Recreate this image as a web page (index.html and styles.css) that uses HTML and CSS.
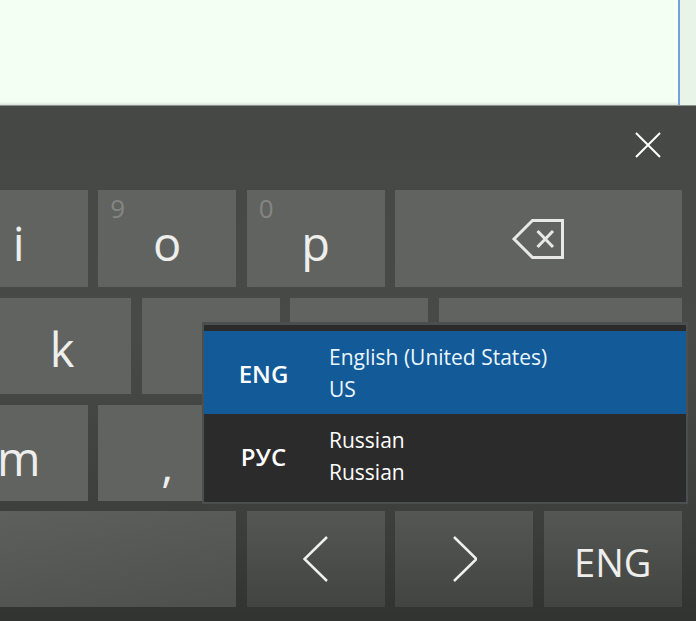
FILE: index.html
```html
<!DOCTYPE html>
<html lang="en">
<head>
<meta charset="utf-8">
<title>Touch keyboard</title>
<link rel="stylesheet" href="styles.css">
</head>
<body>
<div class="document"><div class="document-edge"></div></div>
<section class="keyboard">
  <div class="titlebar">
    <svg class="close-icon" width="26" height="26" viewBox="0 0 26 26"><path d="M1 1 25 25M25 1 1 25"/></svg>
  </div>
  <div class="rows">
    <div class="row">
      <div class="key"><span class="letter">i</span></div>
      <div class="key"><span class="hint">9</span><span class="letter">o</span></div>
      <div class="key"><span class="hint">0</span><span class="letter">p</span></div>
      <div class="key key-back">
        <svg width="54" height="42" viewBox="0 0 54 42"><path class="back-outline" d="M3 21 21.5 2.500H51.500V39.500H21.500Z"/><path class="back-x" d="M26.500 13 42 29M42 13 26.500 29"/></svg>
      </div>
    </div>
    <div class="row">
      <div class="key"><span class="letter letter-k">k</span></div>
      <div class="key"></div>
      <div class="key"></div>
      <div class="key key-enter"></div>
    </div>
    <div class="row">
      <div class="key"><span class="letter">m</span></div>
      <div class="key"><span class="letter letter-comma">,</span></div>
      <div class="key"></div>
      <div class="key"></div>
      <div class="key"></div>
    </div>
    <div class="row row-bottom">
      <div class="key key-space"></div>
      <div class="key">
        <svg class="chevron" width="26" height="46" viewBox="0 0 26 46"><path d="M24 1 1.500 23 24 45"/></svg>
      </div>
      <div class="key">
        <svg class="chevron" width="26" height="46" viewBox="0 0 26 46"><path d="M3 1 25.500 23 3 45"/></svg>
      </div>
      <div class="key"><span class="lang-label">ENG</span></div>
    </div>
  </div>
  <div class="lang-menu">
    <div class="lang-item lang-item-active">
      <span class="lang-code">ENG</span>
      <span class="lang-names"><span>English (United States)</span><span>US</span></span>
    </div>
    <div class="lang-item">
      <span class="lang-code">РУС</span>
      <span class="lang-names"><span>Russian</span><span>Russian</span></span>
    </div>
  </div>
</section>
</body>
</html>
```
FILE: styles.css
```css
* { box-sizing: border-box; }
html, body { margin: 0; height: 100%; overflow: hidden; }
body {
  width: 696px;
  height: 621px;
  font-family: "Open Sans", "Noto Sans", sans-serif;
  background: #333533;
  display: flex;
  flex-direction: column;
}
.document {
  height: 105px;
  flex: none;
  background: #f4fff3;
  box-shadow: inset 0 -3px 3px -2px #d0d8cf;
  display: flex;
  justify-content: flex-end;
}
.document-edge {
  width: 18px;
  background: #e9f4e8;
  border-left: 2px solid #74a1d6;
}
.keyboard {
  position: relative;
  flex: 1;
  border-top: 1px solid #8d908c;
  background: linear-gradient(#464846 0, #484a48 45%, #3d3f3d 80%, #313331 100%);
  overflow: hidden;
}
.titlebar {
  height: 84.4px;
  display: flex;
  justify-content: flex-end;
  align-items: center;
  padding: 0 35px 7px 0;
}
.close-icon path { fill: none; stroke: #fff; stroke-width: 2; }
.rows {
  display: flex;
  flex-direction: column;
  gap: 10.7px;
  padding-right: 14.3px;
}
.row {
  display: flex;
  justify-content: flex-end;
  gap: 10.5px;
  height: 96.5px;
}
.row-bottom { margin-top: -0.8px; height: 96px; }
.key {
  position: relative;
  flex: none;
  width: 138px;
  display: flex;
  align-items: center;
  justify-content: center;
  background: #616361;
  color: #eeeeec;
}
.row-bottom .key { background: linear-gradient(#555755, #424442); }
.row-bottom .key-space { background: linear-gradient(170deg, #616361, #4e504e); }
.key-back { width: 286.500px; }
.key-enter { width: 243px; }
.key-space { width: 400px; }
.letter { font-size: 47px; line-height: 1; padding-top: 10px; }
.letter-k { padding-top: 8px; }
.letter-comma { font-size: 46px; padding-top: 22px; }
.hint {
  position: absolute;
  left: 12px;
  top: 2px;
  font-size: 26px;
  line-height: 32px;
  color: #848684;
}
.lang-label { font-size: 38px; line-height: 1; padding-top: 6px; }
.back-outline, .back-x { fill: none; stroke: #e8e9e7; stroke-width: 3; }
.chevron path { fill: none; stroke: #f0f0ee; stroke-width: 2.500; }
.lang-menu {
  position: absolute;
  left: 202px;
  top: 216px;
  width: 486px;
  height: 182px;
  border: 2px solid #4c4f50;
  border-top-width: 3px;
  background: #2b2b2b;
  padding-top: 6px;
}
.lang-item {
  display: flex;
  align-items: center;
  height: 83px;
  color: #fff;
}
.lang-item-active { background: #125a98; color: #eaf6ff; }
.lang-code {
  width: 119px;
  text-align: center;
  font-size: 24px;
  font-weight: 600;
  color: #fff;
  padding-top: 2px;
}
.lang-names {
  display: flex;
  flex-direction: column;
  margin-left: 6px;
  font-size: 21px;
  line-height: 32px;
}
```
